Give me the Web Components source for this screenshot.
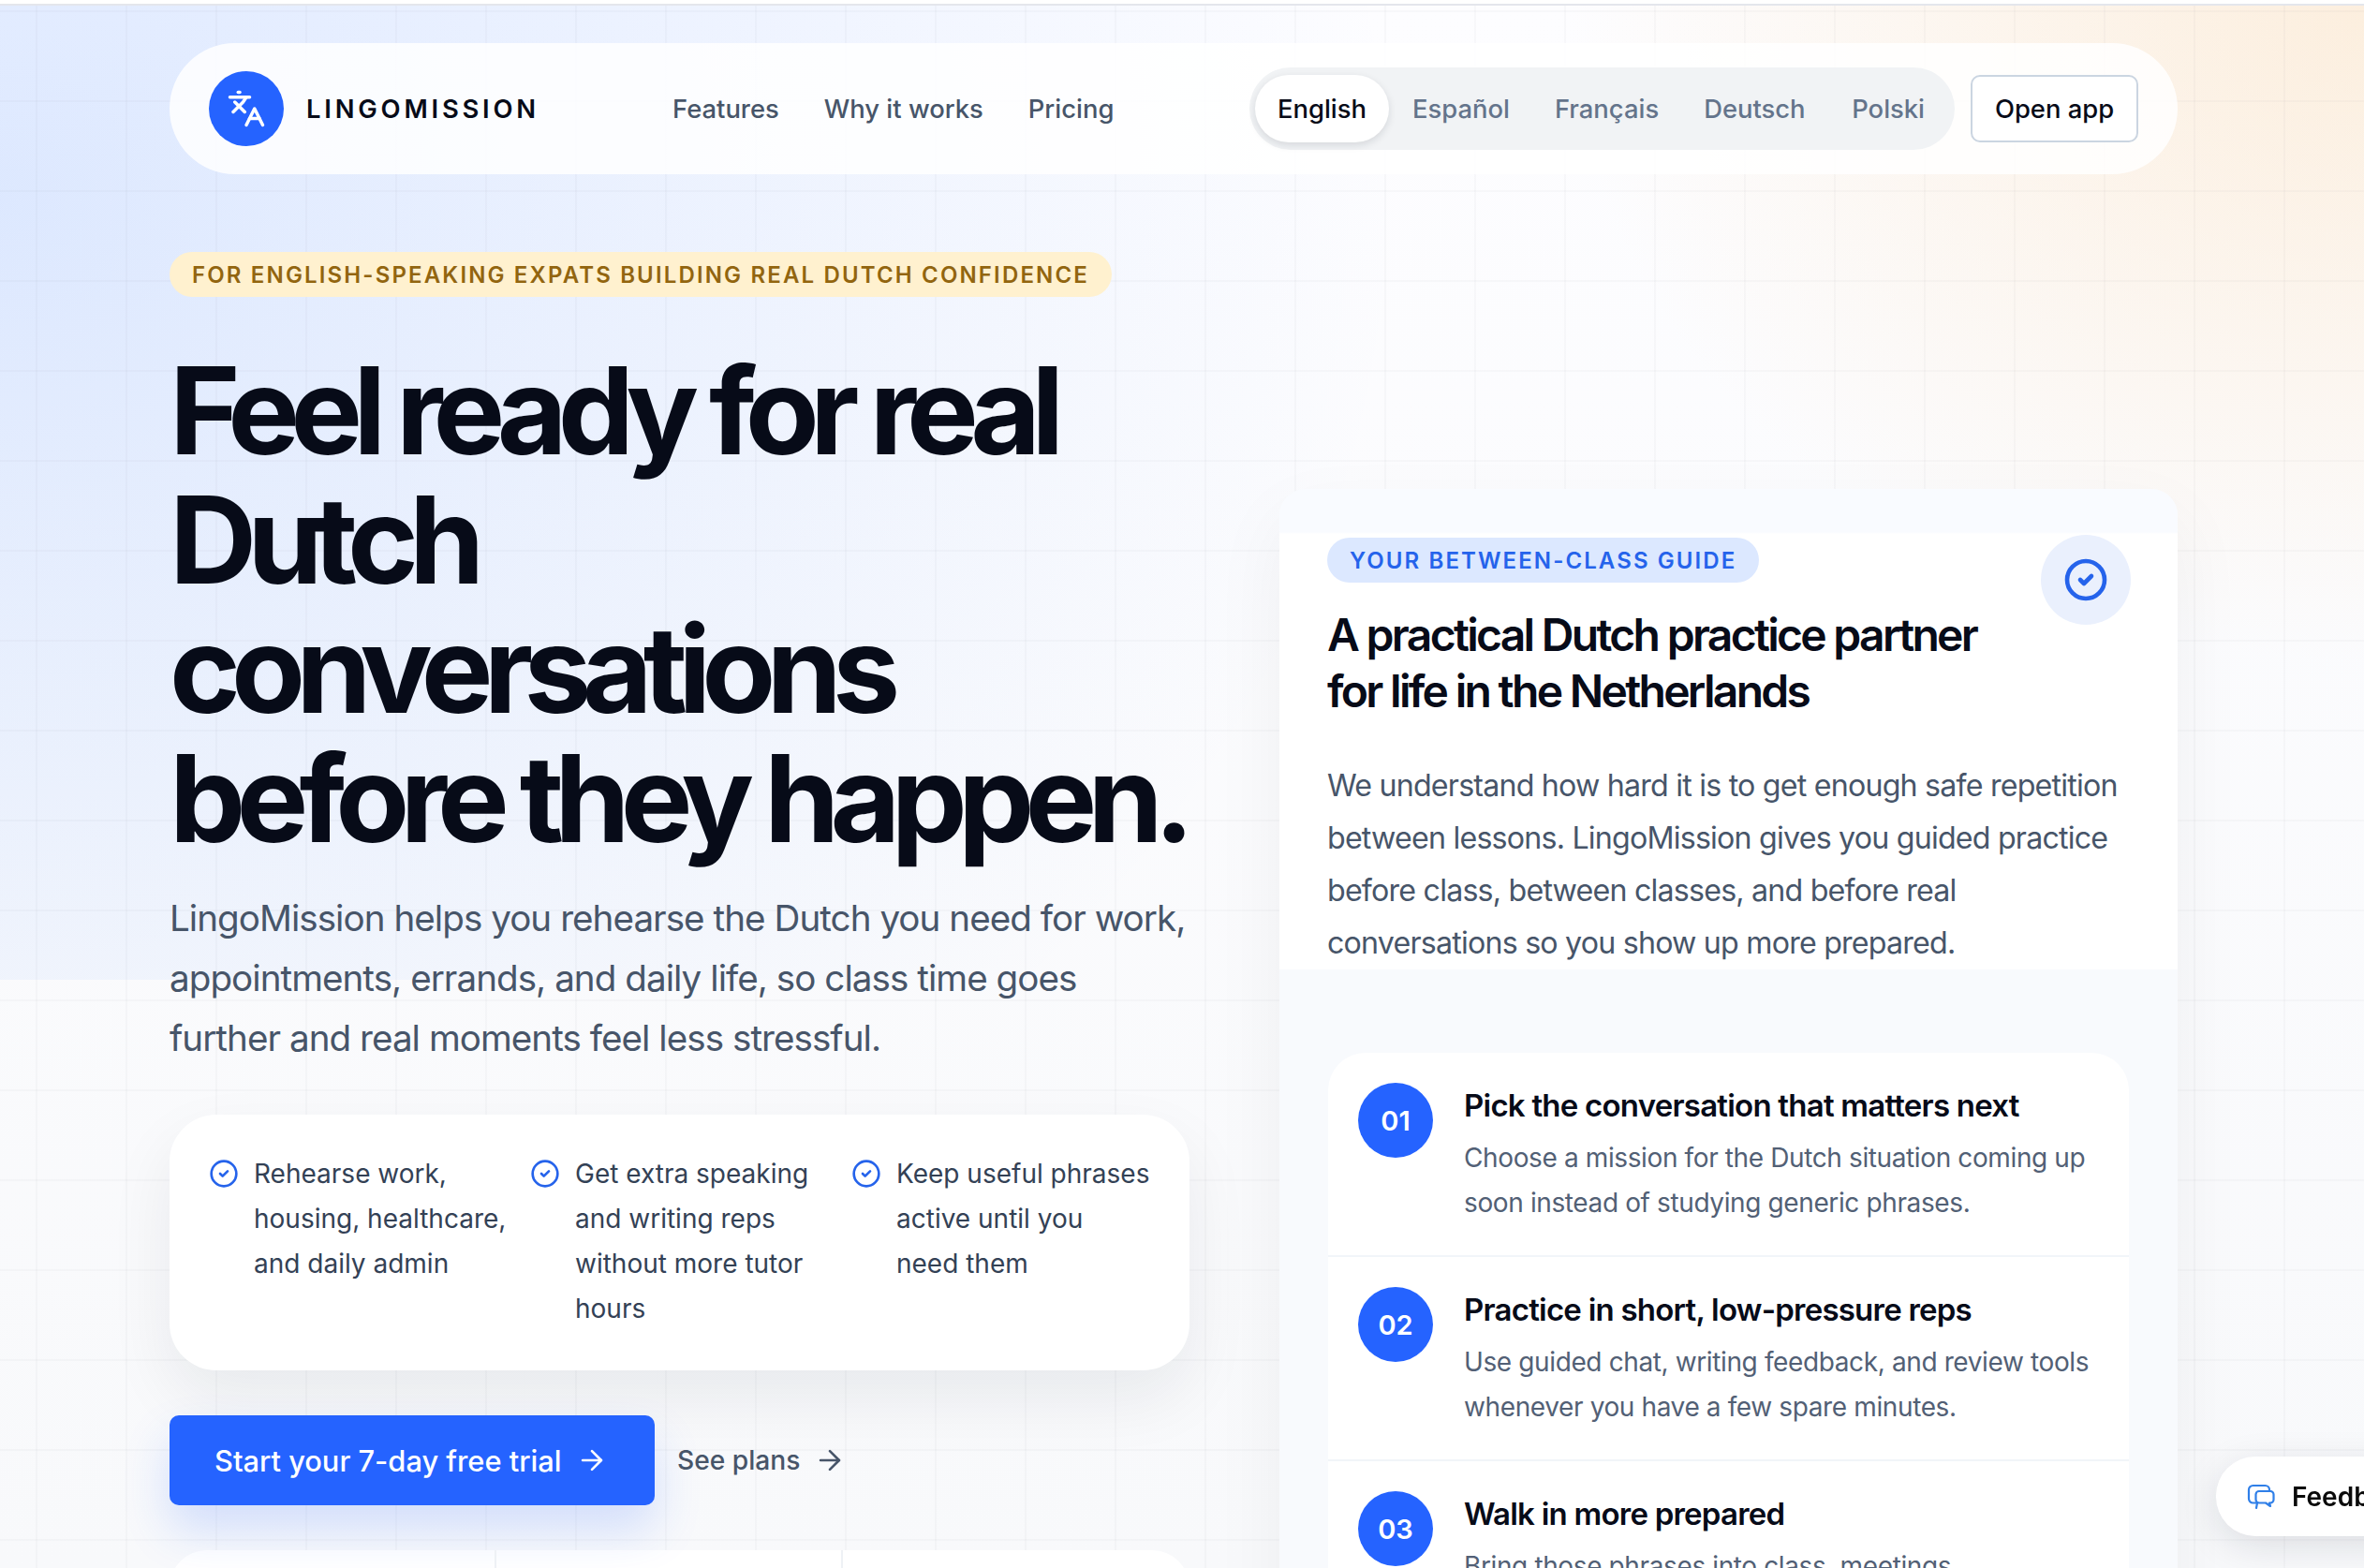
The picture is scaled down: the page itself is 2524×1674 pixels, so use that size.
<!DOCTYPE html>
<html lang="en">
<head>
<meta charset="utf-8">
<title>LingoMission</title>
<style>
  html, body { margin: 0; height: 100%; overflow: hidden; background: #fff; }
  body { font-family: Inter, "Liberation Sans", sans-serif; color: #0f172a; }
</style>
</head>
<body>
<lm-page>
  <lm-nav></lm-nav>
  <main-grid slot="main">
    <lm-hero></lm-hero>
    <lm-guide>
      <lm-step num="01" title="Pick the conversation that matters next">Choose a mission for the Dutch situation coming up soon instead of studying generic phrases.</lm-step>
      <lm-step num="02" title="Practice in short, low-pressure reps">Use guided chat, writing feedback, and review tools whenever you have a few spare minutes.</lm-step>
      <lm-step num="03" title="Walk in more prepared">Bring those phrases into class, meetings, appointments, and everyday moments.</lm-step>
    </lm-guide>
  </main-grid>
</lm-page>
<lm-feedback></lm-feedback>

<script>
// iconos compartidos
const checkIcon = (size, sw) => `<svg width="${size}" height="${size}" viewBox="0 0 24 24" fill="none" stroke="#2563eb" stroke-width="${sw}" stroke-linecap="round" stroke-linejoin="round"><circle cx="12" cy="12" r="10"/><path d="m9 12 2 2 4-4"/></svg>`;
const arrowIcon = (size) => `<svg width="${size}" height="${size}" viewBox="0 0 24 24" fill="none" stroke="currentColor" stroke-width="1.9" stroke-linecap="round" stroke-linejoin="round"><path d="M5 12h14"/><path d="m12 5 7 7-7 7"/></svg>`;

class LmPage extends HTMLElement {
  constructor() {
    super();
    this.attachShadow({ mode: 'open' }).innerHTML = `
      <style>
        :host {
          display: block; box-sizing: border-box; height: 1670px; margin-top: 4px;
          border-top: 2px solid #e4e6ec; padding: 40px 199px 0 181px; overflow: hidden;
          background:
            linear-gradient(to right, rgba(15,23,42,.023) 2px, transparent 2px) 38px 0 / 96px 96px,
            linear-gradient(to bottom, rgba(15,23,42,.023) 2px, transparent 2px) 0 5px / 96px 96px,
            radial-gradient(ellipse 850px 700px at 100% 0, rgba(251,220,180,.44), rgba(251,220,180,0)) 0 0 / 100% 1040px no-repeat,
            radial-gradient(ellipse 1500px 1250px at 0 20%, rgba(40,115,255,.15), rgba(40,115,255,0)) 0 0 / 100% 1040px no-repeat,
            linear-gradient(#fdfdff, #f8f9fb);
        }
      </style>
      <slot></slot><slot name="main"></slot>`;
  }
}

class MainGrid extends HTMLElement {
  constructor() {
    super();
    this.attachShadow({ mode: 'open' }).innerHTML = `
      <style>
        :host { display: grid; grid-template-columns: 1089px 959px; column-gap: 96px; align-items: start; padding-top: 83px; }
      </style>
      <slot></slot>`;
  }
}

class LmNav extends HTMLElement {
  constructor() {
    super();
    const langs = ['Español', 'Français', 'Deutsch', 'Polski'];
    this.attachShadow({ mode: 'open' }).innerHTML = `
      <style>
        :host {
          display: flex; align-items: center; justify-content: space-between; box-sizing: border-box;
          height: 140px; padding: 0 42px; border-radius: 70px;
          background: rgba(255,255,255,.84); font-size: 27.4px; font-weight: 500;
        }
        .left, .right, .links, .brand, .langs { display: flex; align-items: center; }
        .logo { width: 80px; height: 80px; border-radius: 50%; background: #2563ff; display: flex; align-items: center; justify-content: center; }
        .brand { gap: 24px; width: 495px; }
        .name { font-size: 27.4px; font-weight: 600; letter-spacing: 3.8px; color: #070b18; }
        .links { gap: 48px; color: #475569; }
        .right { gap: 17px; }
        .langs { background: #f1f3f5; border-radius: 44px; height: 88px; padding: 0 8px 0 6px; box-sizing: border-box; color: #64748b; }
        .langs span { padding: 0 24px; line-height: 72px; }
        .langs span:last-child { padding-left: 25.6px; }
        .langs .on { background: #fff; color: #070b18; border-radius: 36px; box-shadow: 0 3px 8px rgba(15,23,42,.12); margin-right: 1px; }
        .app { box-sizing: border-box; height: 72px; width: 179px; line-height: 68px; text-align: center; border: 2px solid #cbd5e1; border-radius: 10px; background: #fff; color: #070b18; }
      </style>
      <div class="left">
        <div class="brand">
          <div class="logo"><svg width="42" height="42" viewBox="0 0 24 24" fill="none" stroke="#fff" stroke-width="2" stroke-linecap="round" stroke-linejoin="round"><path d="m5 8 6 6"/><path d="m4 14 6-6 2-3"/><path d="M2 5h12"/><path d="M7 2h1"/><path d="m22 22-5-10-5 10"/><path d="M14 18h6"/></svg></div>
          <span class="name">LINGOMISSION</span>
        </div>
        <div class="links"><span>Features</span><span>Why it works</span><span>Pricing</span></div>
      </div>
      <div class="right">
        <div class="langs"><span class="on">English</span>${langs.map(l => `<span>${l}</span>`).join('')}</div>
        <div class="app">Open app</div>
      </div>`;
  }
}

class LmHero extends HTMLElement {
  constructor() {
    super();
    const items = ['Rehearse work, housing, healthcare, and daily admin', 'Get extra speaking and writing reps without more tutor hours', 'Keep useful phrases active until you need them'];
    this.attachShadow({ mode: 'open' }).innerHTML = `
      <style>
        :host { display: block; }
        .eyebrow { display: inline-block; box-sizing: border-box; height: 48px; line-height: 50px; padding: 0 24px; border-radius: 24px; background: #fff1cf; color: #92650f; font-size: 24px; font-weight: 600; letter-spacing: 2.15px; white-space: nowrap; }
        h1 { margin: 52px 0 27px; font-size: 129px; line-height: 138px; font-weight: 700; letter-spacing: -9.85px; color: #070b18; }
        .sub { margin: 0 0 50px; font-size: 38.6px; line-height: 64px; color: #475569; letter-spacing: -.95px; }
        .features { display: grid; grid-template-columns: repeat(3, 319px); column-gap: 24px; box-sizing: border-box; height: 273px; padding: 39px 42px 0; background: #fff; border-radius: 50px; box-shadow: 0 30px 70px rgba(15,23,42,.07); font-size: 28px; line-height: 48px; color: #334155; }
        .item { display: flex; gap: 16px; }
        .item svg { flex: none; margin-top: 8px; }
        .cta { display: flex; align-items: center; gap: 24px; margin: 48px 0; }
        .primary { display: flex; align-items: center; gap: 15px; box-sizing: border-box; height: 96px; width: 518px; padding: 0 48px; background: #2563ff; color: #fff; border-radius: 10px; font-size: 30.8px; font-weight: 500; box-shadow: 0 26px 50px rgba(37,99,255,.18); white-space: nowrap; }
        .ghost { display: flex; align-items: center; gap: 14px; color: #475569; font-size: 28.2px; font-weight: 500; }
        .stats { display: grid; grid-template-columns: 347px 370px 1fr; height: 300px; background: #fff; border-radius: 40px; }
        .stats div + div { border-left: 2px solid #eef1f5; }
      </style>
      <span class="eyebrow">FOR ENGLISH-SPEAKING EXPATS BUILDING REAL DUTCH CONFIDENCE</span>
      <h1>Feel ready for real Dutch conversations before they happen.</h1>
      <p class="sub">LingoMission helps you rehearse the Dutch you need for work, appointments, errands, and daily life, so class time goes further and real moments feel less stressful.</p>
      <div class="features">${items.map(t => `<div class="item">${checkIcon(32, 2)}<span>${t}</span></div>`).join('')}</div>
      <div class="cta">
        <div class="primary"><span>Start your 7-day free trial</span>${arrowIcon(34)}</div>
        <div class="ghost"><span>See plans</span>${arrowIcon(34)}</div>
      </div>
      <div class="stats"><div></div><div></div><div></div></div>`;
  }
}

class LmGuide extends HTMLElement {
  constructor() {
    super();
    this.attachShadow({ mode: 'open' }).innerHTML = `
      <style>
        :host { display: block; margin-top: 253px; background: #f8fafd; border-radius: 28px 28px 0 0; box-shadow: 0 30px 80px rgba(15,23,42,.05); height: 1300px; }
        .head { position: relative; box-sizing: border-box; height: 513px; padding: 52px 51px 0; background: linear-gradient(#f9fbff 0, #f9fbff 46px, #fff 48px, #fff 100%); border-radius: 28px 28px 0 0; }
        .badge { display: inline-block; height: 48px; line-height: 50px; padding: 0 24px; border-radius: 24px; background: #dce8ff; color: #2563eb; font-size: 24px; font-weight: 600; letter-spacing: 2.1px; white-space: nowrap; }
        .mark { position: absolute; right: 50px; top: 49px; width: 96px; height: 96px; border-radius: 50%; background: #eaf0fd; display: flex; align-items: center; justify-content: center; }
        h2 { margin: 26px 0 43px; width: 739px; font-size: 48px; line-height: 60px; font-weight: 600; letter-spacing: -2.7px; color: #070b18; }
        p { margin: 0; font-size: 32.2px; line-height: 56px; letter-spacing: -.8px; color: #475569; }
        .steps { margin: 89px 52px 0; background: #fff; border-radius: 40px 40px 0 0; }
      </style>
      <div class="head">
        <span class="badge">YOUR BETWEEN-CLASS GUIDE</span>
        <div class="mark">${checkIcon(48, 2.3)}</div>
        <h2>A practical Dutch practice partner for life in the Netherlands</h2>
        <p>We understand how hard it is to get enough safe repetition between lessons. LingoMission gives you guided practice before class, between classes, and before real conversations so you show up more prepared.</p>
      </div>
      <div class="steps"><slot></slot></div>`;
  }
}

class LmStep extends HTMLElement {
  constructor() {
    super();
    this.attachShadow({ mode: 'open' }).innerHTML = `
      <style>
        :host { display: flex; gap: 33px; box-sizing: border-box; height: 218px; padding: 32px 32px 0; border-bottom: 2px solid #f1f5f9; }
        .num { flex: none; width: 80px; height: 80px; border-radius: 50%; background: #2563ff; color: #fff; font-size: 29px; font-weight: 600; display: flex; align-items: center; justify-content: center; }
        .title { margin-top: 2px; font-size: 33px; line-height: 44px; font-weight: 600; color: #070b18; letter-spacing: -.77px; }
        .desc { margin-top: 10px; font-size: 28px; line-height: 48px; letter-spacing: -.38px; color: #526075; }
      </style>
      <div class="num">${this.getAttribute('num')}</div>
      <div><div class="title">${this.getAttribute('title')}</div><div class="desc"><slot></slot></div></div>`;
  }
}

class LmFeedback extends HTMLElement {
  constructor() {
    super();
    this.attachShadow({ mode: 'open' }).innerHTML = `
      <style>
        /* flota sobre la pagina, cortado por el borde derecho */
        :host { position: fixed; left: 2366px; top: 1555px; width: 260px; height: 85px; box-sizing: border-box; padding-left: 33px; display: flex; align-items: center; gap: 18px; background: #fff; border-radius: 42px; box-shadow: 0 10px 40px rgba(15,23,42,.12); font-size: 28px; font-weight: 600; color: #0a0a0a; }
      </style>
      <svg width="30" height="28" viewBox="0 0 30 28" fill="none" stroke="#2f7fe8" stroke-width="2.2" stroke-linejoin="round" stroke-linecap="round">
        <path d="M10 26l1-5.500H6.500A4.500 4.500 0 0 1 2 16V6.500A4.500 4.500 0 0 1 6.500 2h13A4.500 4.500 0 0 1 24 6.500V8"/>
        <path d="M13 8h12a3.500 3.500 0 0 1 3.500 3.500V17a3.500 3.500 0 0 1-3.500 3.500h-1L25 24l-5-3.500h-7A3.500 3.500 0 0 1 9.500 17v-5.500A3.500 3.500 0 0 1 13 8z"/>
      </svg>
      <span>Feedback</span>`;
  }
}

customElements.define('lm-page', LmPage);
customElements.define('main-grid', MainGrid);
customElements.define('lm-nav', LmNav);
customElements.define('lm-hero', LmHero);
customElements.define('lm-guide', LmGuide);
customElements.define('lm-step', LmStep);
customElements.define('lm-feedback', LmFeedback);
</script>
</body>
</html>
